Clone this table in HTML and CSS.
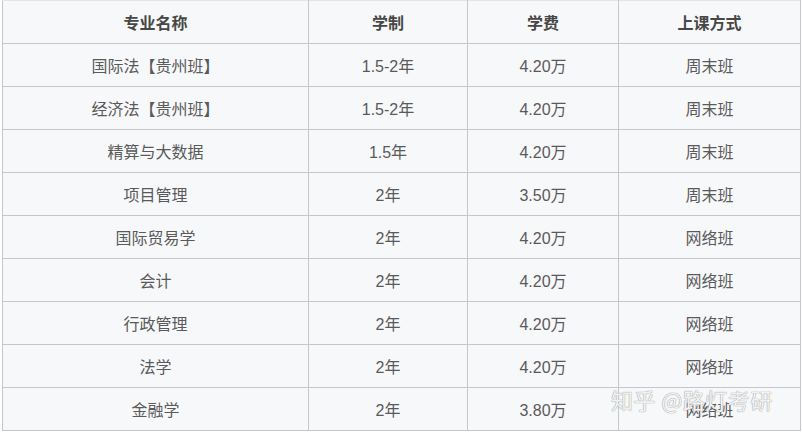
FILE: index.html
```html
<!DOCTYPE html>
<html lang="zh">
<head>
<meta charset="utf-8">
<link rel="stylesheet" href="styles.css">
</head>
<body>
<div class="page">
  <table class="grid">
    <colgroup>
      <col class="c1"><col class="c2"><col class="c3"><col class="c4">
    </colgroup>
    <thead>
      <tr><th>专业名称</th><th>学制</th><th>学费</th><th>上课方式</th></tr>
    </thead>
    <tbody>
      <tr><td>国际法【贵州班】</td><td>1.5-2年</td><td>4.20万</td><td>周末班</td></tr>
      <tr><td>经济法【贵州班】</td><td>1.5-2年</td><td>4.20万</td><td>周末班</td></tr>
      <tr><td>精算与大数据</td><td>1.5年</td><td>4.20万</td><td>周末班</td></tr>
      <tr><td>项目管理</td><td>2年</td><td>3.50万</td><td>周末班</td></tr>
      <tr><td>国际贸易学</td><td>2年</td><td>4.20万</td><td>网络班</td></tr>
      <tr><td>会计</td><td>2年</td><td>4.20万</td><td>网络班</td></tr>
      <tr><td>行政管理</td><td>2年</td><td>4.20万</td><td>网络班</td></tr>
      <tr><td>法学</td><td>2年</td><td>4.20万</td><td>网络班</td></tr>
      <tr><td>金融学</td><td>2年</td><td>3.80万</td><td>网络班</td></tr>
    </tbody>
  </table>
  <div class="watermark">知乎 @路灯考研</div>
</div>
</body>
</html>
```
FILE: styles.css
```css
html, body {
  margin: 0;
  padding: 0;
  background: #ffffff;
}
.page {
  position: relative;
  width: 802px;
  height: 432px;
  overflow: hidden;
  padding-left: 2px;
  box-sizing: border-box;
}
.grid {
  border-collapse: collapse;
  table-layout: fixed;
  width: 798px;
  background: #f7f8fa;
  font-family: "Liberation Sans", "Noto Sans CJK SC", sans-serif;
  font-size: 16px;
  color: #5a5a5a;
}
.c1 { width: 306px; }
.c2 { width: 159px; }
.c3 { width: 151px; }
.c4 { width: 182px; }
.grid th, .grid td {
  border: 1px solid #c6c6cb;
  height: 43px;
  padding: 0;
  text-align: center;
  vertical-align: middle;
  box-sizing: border-box;
}
.grid th {
  font-weight: bold;
  color: #474747;
  border-top-color: #e4e4e8;
}
.watermark {
  position: absolute;
  left: 611px;
  top: 384px;
  font-family: "Noto Sans CJK SC", sans-serif;
  font-size: 22px;
  line-height: 30px;
  color: rgba(255,255,255,0.9);
  text-shadow: 0 0 1px #9a9a9a, 0 0 1px #9a9a9a;
  letter-spacing: 0.5px;
  white-space: nowrap;
}
```
